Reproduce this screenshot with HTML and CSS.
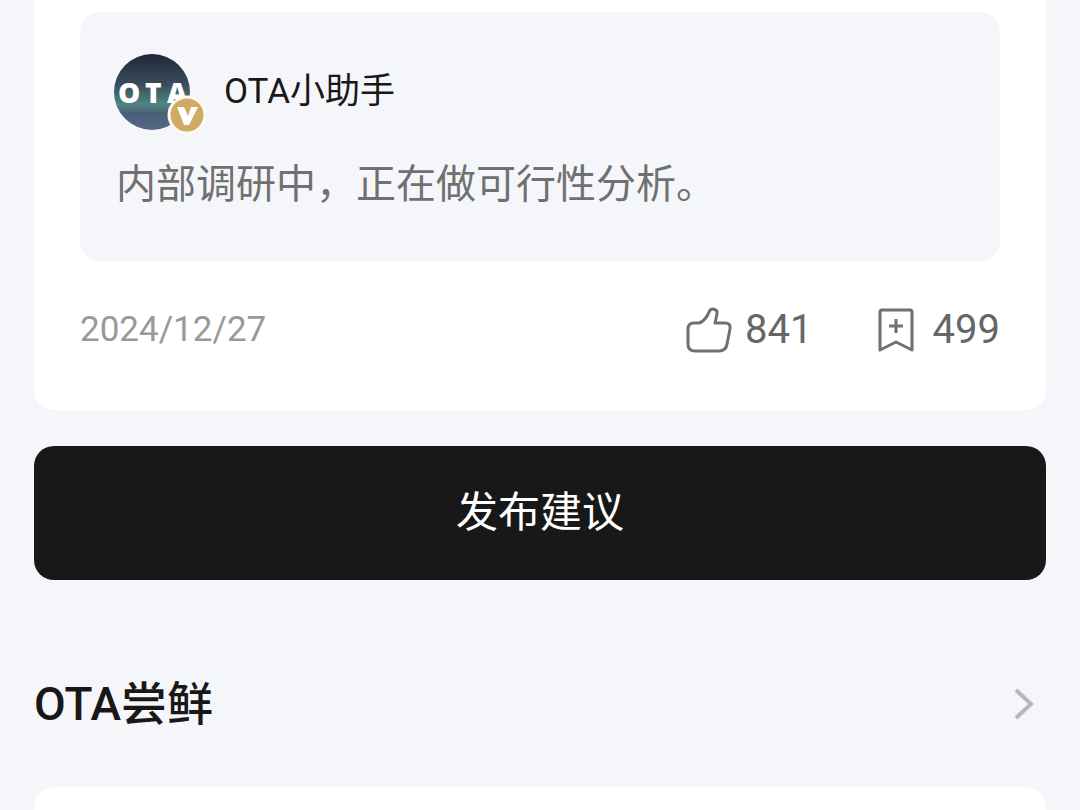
FILE: index.html
```html
<!DOCTYPE html>
<html lang="zh-CN">
<head>
    <meta charset="UTF-8">
    <meta name="viewport" content="width=device-width, initial-scale=1.0">
    <title>OTA</title>
    <link rel="stylesheet" href="styles.css">
</head>
<body>
    <article class="card">
        <div class="reply">
            <div class="author">
                <div class="avatar">
                    <svg class="avatar-image" viewBox="0 0 76 76" aria-hidden="true">
                        <defs>
                            <linearGradient id="sky" x1="0" y1="0" x2="0" y2="1">
                                <stop offset="0" stop-color="#1f2738"/>
                                <stop offset="0.4" stop-color="#3c4b5e"/>
                                <stop offset="0.56" stop-color="#43716f"/>
                                <stop offset="0.66" stop-color="#518480"/>
                                <stop offset="0.78" stop-color="#485f77"/>
                                <stop offset="1" stop-color="#566684"/>
                            </linearGradient>
                        </defs>
                        <circle cx="38" cy="38" r="38" fill="url(#sky)"/>
                        <text class="avatar-text" x="4" y="49">O</text>
                        <text class="avatar-text" x="31" y="49">T</text>
                        <text class="avatar-text" x="53" y="49">A</text>
                    </svg>
                    <svg class="badge" viewBox="0 0 40 40" aria-hidden="true">
                        <circle cx="20" cy="20" r="18" fill="#d0ab63" stroke="#fffaf0" stroke-width="3"/>
                        <path d="M10 12h7l4 9 3-9h7l-9 18h-5z" fill="#fff"/>
                    </svg>
                </div>
                <span class="name">OTA小助手</span>
            </div>
            <p class="message">内部调研中，正在做可行性分析。</p>
        </div>
        <div class="meta">
            <time class="date" datetime="2024-12-27">2024/12/27</time>
            <button class="action" type="button">
                <svg class="icon" viewBox="0 0 48 48" aria-hidden="true">
                    <path d="M9 17h5c5-1 9-8 10-11 2-5 9-3 8 2l-2 9h10q6 0 5 6l-3 15q-1 7-8 7H10q-7 0-7-7V23q0-6 6-6z"/>
                </svg>
                841
            </button>
            <button class="action" type="button">
                <svg class="icon" viewBox="0 0 48 48" aria-hidden="true">
                    <path d="M9 4h28q2 0 2 2v38l-16-8-16 8V6q0-2 2-2zM23 13v14M16 20h14"/>
                </svg>
                499
            </button>
        </div>
    </article>

    <button class="publish" type="button">发布建议</button>

    <a class="section-link" href="#preview">
        <h2 class="section-title">OTA尝鲜</h2>
        <svg class="chevron" viewBox="0 0 24 32" aria-hidden="true">
            <path d="M4 2l15 14L4 30"/>
        </svg>
    </a>

    <section class="preview" id="preview"></section>
</body>
</html>
```
FILE: styles.css
```css
* {
    box-sizing: border-box;
}

body {
    display: flex;
    flex-direction: column;
    min-height: 100vh;
    margin: 0;
    padding: 0 34px;
    font-family: Roboto, "Noto Sans CJK SC", sans-serif;
    background-color: #f5f6fa;
    color: #181818;
}

button {
    border: none;
    font-family: inherit;
    cursor: pointer;
}

.card {
    padding: 12px 46px 50px;
    background-color: #fff;
    border-radius: 0 0 20px 20px;
}

.reply {
    padding: 42px 34px 46px;
    background-color: #f5f6fa;
    border-radius: 20px;
}

.author {
    display: flex;
    align-items: center;
    gap: 34px;
}

.avatar {
    position: relative;
    width: 76px;
    height: 76px;
}

.avatar-image {
    display: block;
    width: 100%;
    height: 100%;
}

.avatar-text {
    fill: #fff;
    font-family: "Open Sans", sans-serif;
    font-size: 28px;
    font-weight: 800;
}

/* Sits over the lower right edge of the avatar */
.badge {
    position: absolute;
    right: -17px;
    bottom: -5px;
    width: 40px;
    height: 40px;
}

.name {
    font-size: 35px;
    line-height: 48px;
}

.message {
    margin: 25px 0 0;
    padding-left: 2px;
    font-size: 40px;
    line-height: 60px;
    color: #707070;
}

.meta {
    display: flex;
    align-items: center;
    gap: 60px;
    margin-top: 39px;
}

.date {
    flex: 1;
    font-size: 35px;
    line-height: 60px;
    color: #999;
}

.action {
    display: flex;
    align-items: center;
    gap: 12px;
    padding: 0;
    background: none;
    font-size: 40px;
    line-height: 60px;
    color: #666;
}

.icon {
    width: 48px;
    height: 48px;
    fill: none;
    stroke: #707070;
    stroke-width: 3;
    stroke-linejoin: round;
}

.publish {
    margin-top: 36px;
    padding: 37px;
    background-color: #181818;
    border-radius: 20px;
    font-size: 42px;
    line-height: 60px;
    color: #fff;
}

.section-link {
    display: flex;
    align-items: center;
    justify-content: space-between;
    margin-top: 92px;
    padding-right: 10px;
    color: inherit;
    text-decoration: none;
}

.section-title {
    margin: 0;
    font-size: 46px;
    font-weight: 500;
    line-height: 64px;
}

.chevron {
    width: 24px;
    height: 32px;
    fill: none;
    stroke: #b8b8b8;
    stroke-width: 4;
}

.preview {
    flex: 1;
    margin-top: 51px;
    background-color: #fff;
    border-radius: 20px 20px 0 0;
}
```
